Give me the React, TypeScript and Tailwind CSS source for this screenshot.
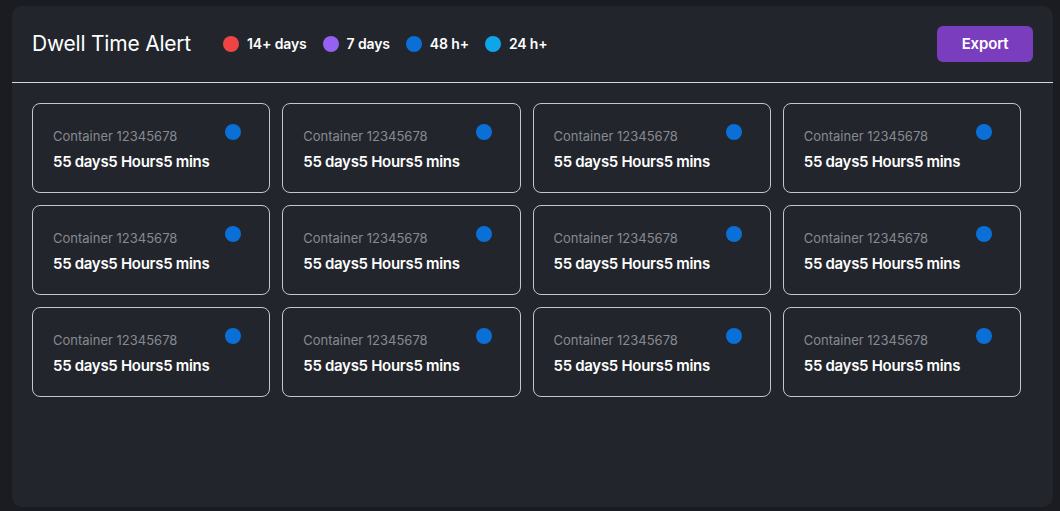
import React from 'react';

const legend = [
  { label: '14+ days', color: 'bg-[#ef4444]' },
  { label: '7 days', color: 'bg-[#9461f0]' },
  { label: '48 h+', color: 'bg-[#0a6fd6]' },
  { label: '24 h+', color: 'bg-[#0ea5e9]' },
];

const containers = Array.from({ length: 12 }, (_, i) => ({
  id: i,
  name: 'Container 12345678',
  dwell: '55 days5 Hours5 mins',
}));

const ContainerCard = ({ name, dwell }: { name: string; dwell: string }) => (
  <div className="h-[90px] rounded-lg border border-[#c4c6ca] px-5 pt-5 flex justify-between items-start">
    <div className="pt-1">
      <p className="text-[13px] leading-4 text-[#878a91]">{name}</p>
      <p className="mt-2 text-[15px] leading-5 font-semibold tracking-[-0.02em] text-white">{dwell}</p>
    </div>
    <span className="w-4 h-4 rounded-full bg-[#0a6fd6] mr-2 shrink-0" />
  </div>
);

const App = () => {
  return (
    <div
      className="h-[511px] w-full bg-[#1b1c21] pl-3 pt-1.5 pr-[7px] pb-1 flex"
      style={{ fontFamily: 'Inter, "Noto Sans", sans-serif' }}
    >
      <div className="flex-1 bg-[#22252c] rounded-[10px] flex flex-col">
        {/* Header */}
        <div className="flex items-center justify-between px-5 pt-5 pb-5 border-b border-[#d6d7d9]">
          <div className="flex items-center">
            <h1 className="text-[21px] leading-7 text-white tracking-[-0.01em]">Dwell Time Alert</h1>
            <div className="flex items-center gap-4 ml-8">
              {legend.map(item => (
                <div key={item.label} className="flex items-center gap-2">
                  <span className={`w-4 h-4 rounded-full ${item.color}`} />
                  <span className="text-sm font-semibold text-white tracking-[-0.01em]">{item.label}</span>
                </div>
              ))}
            </div>
          </div>
          <button className="h-9 w-24 rounded-md bg-[#7a3dbe] text-white text-[15px] font-semibold tracking-[-0.01em]">
            Export
          </button>
        </div>

        {/* Cards */}
        <div className="grid grid-cols-4 gap-3 pl-5 pr-8 pt-5">
          {containers.map(c => (
            <ContainerCard key={c.id} name={c.name} dwell={c.dwell} />
          ))}
        </div>
      </div>
    </div>
  );
};

export default App;
